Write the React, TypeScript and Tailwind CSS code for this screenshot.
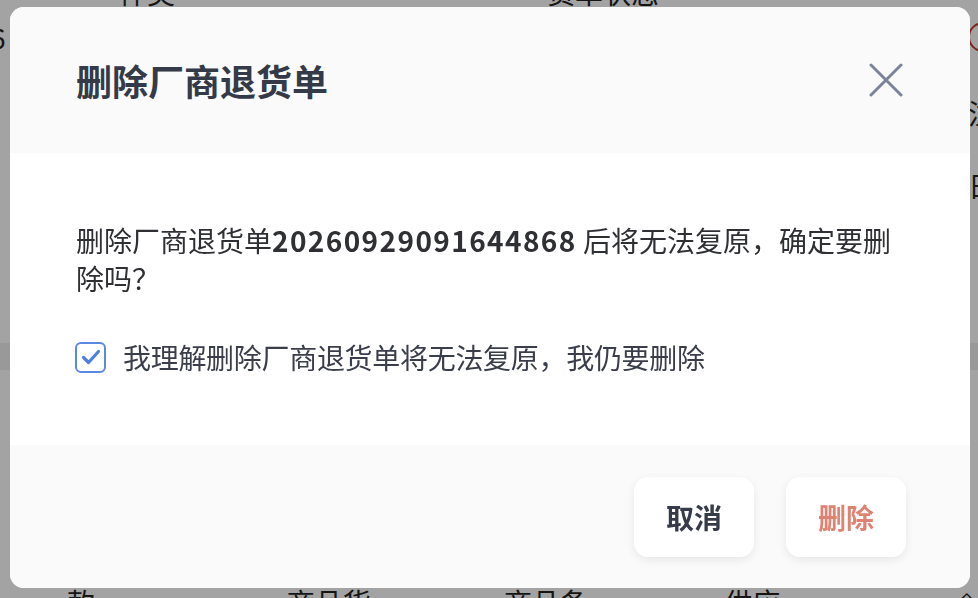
import { useState } from 'react';

function CloseIcon() {
  return (
    <svg width="34" height="34" viewBox="0 0 34 34" fill="none">
      <path d="M2 2L32 32M32 2L2 32" stroke="#7c8598" strokeWidth="3" strokeLinecap="round" />
    </svg>
  );
}

function CheckIcon() {
  return (
    <svg width="22" height="22" viewBox="0 0 22 22" fill="none">
      <path d="M3.5 11.5L8.5 16.5L18.5 5.5" stroke="#4f7fdf" strokeWidth="3.2" strokeLinecap="round" strokeLinejoin="round" />
    </svg>
  );
}

// Page behind the overlay
function BackgroundPage() {
  return (
    <div className="flex h-[598px] flex-col bg-white text-[28px] text-[#222]">
      <div className="h-[12px] overflow-hidden">
        <div className="-mt-[26px] flex leading-[36px]">
          <span className="ml-[119px]">件类</span>
          <span className="ml-[372px]">货单状态</span>
        </div>
      </div>
      <div className="flex h-[50px] items-center justify-between">
        <span className="-ml-[10px]">6</span>
        <span className="-mr-[20px] h-[30px] w-[30px] rounded-full border-2 border-[#c0392b]" />
      </div>
      <div className="flex h-[281px] flex-col items-end gap-[30px] pt-[30px]">
        <span className="-mr-[18px]">注</span>
        <span className="-mr-[18px]">日</span>
        <span className="-mr-[18px]">+</span>
      </div>
      <div className="h-[27px] bg-[#efefef]" />
      <div className="flex-1" />
      <div className="flex h-[14px] items-start overflow-hidden leading-[36px]">
        <span className="ml-[67px]">款式</span>
        <span className="ml-[166px]">商品货号</span>
        <span className="ml-[110px]">商品条码</span>
        <span className="ml-[113px]">供应商</span>
        <span className="ml-[150px]">⇪</span>
      </div>
    </div>
  );
}

export default function App() {
  const [checked, setChecked] = useState(true);

  return (
    <div className="relative h-[598px] w-[978px] overflow-hidden font-['Noto_Sans_CJK_SC','Noto_Sans',sans-serif]">
      <BackgroundPage />

      {/* Overlay + dialog */}
      <div className="fixed inset-0 flex items-start bg-black/[0.36] pl-[10px] pt-[7px]">
        <div className="flex h-[581px] w-[960px] flex-col overflow-hidden rounded-[14px] bg-white">
          <div className="flex h-[146px] items-center justify-between bg-[#fafafa] pl-[66px] pr-[67px]">
            <h2 className="text-[36px] font-bold text-[#353a48]">删除厂商退货单</h2>
            <button className="flex h-[34px] w-[34px] items-center justify-center">
              <CloseIcon />
            </button>
          </div>

          <div className="flex h-[292px] flex-col pl-[66px] pr-[66px] pt-[68px]">
            <p className="text-[28px] leading-[38px] text-[#2f3034]">
              删除厂商退货单<b className="font-bold tracking-[1.4px]">20260929091644868</b> 后将无法复原，确定要删除吗？
            </p>
            <label className="mt-[40px] flex h-[40px] items-center gap-[17px]" onClick={() => setChecked(!checked)}>
              <span className="-ml-[1px] flex h-[31px] w-[31px] items-center justify-center rounded-[6px] border-2 border-[#5b88e2] bg-white">
                {checked && <CheckIcon />}
              </span>
              <span className="text-[28px] tracking-[-0.3px] text-[#3a3e4b]">我理解删除厂商退货单将无法复原，我仍要删除</span>
            </label>
          </div>

          <div className="flex flex-1 items-start justify-end gap-[32px] bg-[#fafafa] pr-[64px] pt-[32px]">
            <button className="h-[80px] w-[120px] rounded-[14px] bg-white text-[28px] font-bold text-[#363b4a] shadow-[0_3px_8px_rgba(0,0,0,0.08)]">
              取消
            </button>
            <button className="h-[80px] w-[120px] rounded-[14px] bg-white text-[28px] font-bold text-[#de8272] shadow-[0_3px_8px_rgba(0,0,0,0.08)]">
              删除
            </button>
          </div>
        </div>
      </div>
    </div>
  );
}
